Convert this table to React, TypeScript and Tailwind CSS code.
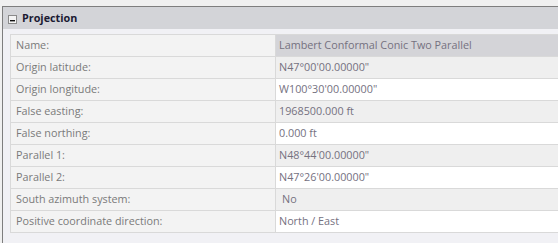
import React from "react";

type Row = { label: string; value: string; tone: "name" | "gray" | "white"; indent?: boolean };

const rows: Row[] = [
  { label: "Name:", value: "Lambert Conformal Conic Two Parallel", tone: "name" },
  { label: "Origin latitude:", value: "N47°00'00.00000\"", tone: "gray" },
  { label: "Origin longitude:", value: "W100°30'00.00000\"", tone: "white" },
  { label: "False easting:", value: "1968500.000 ft", tone: "gray" },
  { label: "False northing:", value: "0.000 ft", tone: "white" },
  { label: "Parallel 1:", value: "N48°44'00.00000\"", tone: "gray" },
  { label: "Parallel 2:", value: "N47°26'00.00000\"", tone: "white" },
  { label: "South azimuth system:", value: "No", tone: "gray", indent: true },
  { label: "Positive coordinate direction:", value: "North / East", tone: "white" },
];

const toneClass: Record<Row["tone"], string> = {
  name: "bg-[#d4d4d8]",
  gray: "bg-[#efefef]",
  white: "bg-white",
};

function CollapseBox() {
  return (
    <svg width="9" height="9" viewBox="0 0 9 9" className="shrink-0 mt-[2px]">
      <rect x="0.5" y="0.5" width="8" height="8" fill="#f4f4f4" stroke="#8a8a8a" />
      <rect x="2" y="5" width="5" height="1.4" fill="#111" />
    </svg>
  );
}

export default function App() {
  return (
    <div
      className="w-[558px] h-[243px] bg-[#f0f0f0] pt-[6px] pl-[2px] overflow-hidden"
      style={{ fontFamily: '"Open Sans", "Noto Sans", sans-serif' }}
    >
      <div className="h-full border-l border-t border-[#7e7e7e] bg-[#f1f1f5] flex flex-col">
        <div className="h-[22px] bg-[#d3d4d8] flex items-center pl-[5px] gap-[5px]">
          <CollapseBox />
          <span className="text-[10.8px] font-bold text-[#1b1b33] leading-none">Projection</span>
        </div>
        <div className="pt-[5px] pl-[7px]">
          <div className="border-l border-t border-[#d9d9d9]">
            {rows.map((r) => (
              <div key={r.label} className="flex h-[22px] border-b border-[#d9d9d9]">
                <div className="w-[265px] shrink-0 border-r border-[#d9d9d9] bg-[#f3f3f3] flex items-center pl-[5px] text-[10.8px] text-[#7a7a7a] whitespace-nowrap">
                  {r.label}
                </div>
                <div
                  className={`flex-1 flex items-center text-[10.8px] text-[#75717f] whitespace-nowrap ${toneClass[r.tone]} ${
                    r.indent ? "pl-[6px]" : "pl-[3px]"
                  }`}
                >
                  {r.value}
                </div>
              </div>
            ))}
          </div>
        </div>
      </div>
    </div>
  );
}
